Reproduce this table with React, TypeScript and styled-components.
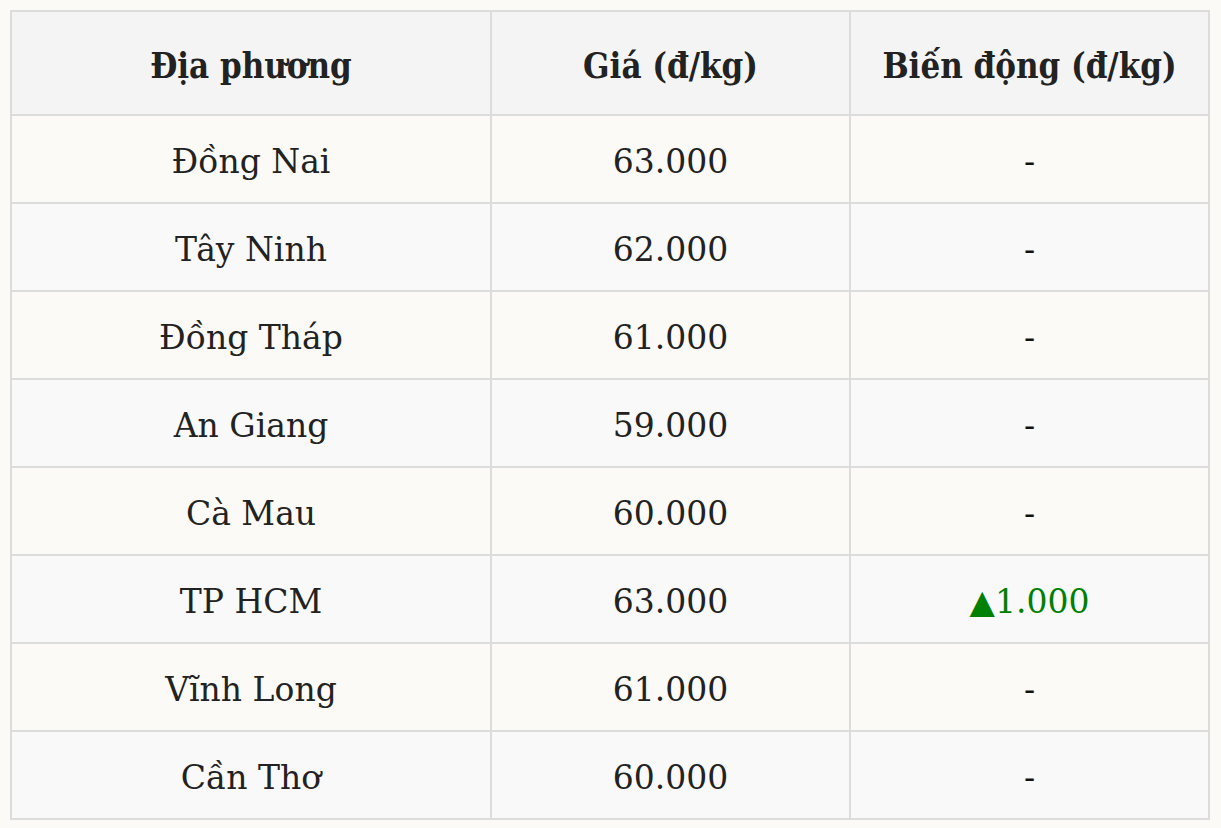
import React from "react";
import styled, { createGlobalStyle } from "styled-components";

interface PriceRow {
  region: string;
  price: string;
  change: number;
}

const GlobalStyle = createGlobalStyle`
  body {
    margin: 0;
    background-color: #fbfaf7;
    font-family: "DejaVu Serif", "Liberation Serif", serif;
    color: #222;
  }
`;

const Page = styled.div`
  padding: 10px 11px 8px 10px;
`;

const PriceTable = styled.table`
  width: 100%;
  border-collapse: collapse;
  table-layout: fixed;
  border: 2px solid #dcdcdc;
`;

const HeadCell = styled.th<{ width: string }>`
  width: ${(props) => props.width};
  height: 104px;
  padding: 6px 8px 0;
  box-sizing: border-box;
  background-color: #f4f4f4;
  border: 2px solid #dcdcdc;
  font-size: 34.5px;
  font-weight: bold;
  font-stretch: condensed;
  text-align: center;
  vertical-align: middle;
`;

const Row = styled.tr<{ striped: boolean }>`
  background-color: ${(props) => (props.striped ? "#f9f9f9" : "#fbfaf6")};
`;

const Cell = styled.td`
  height: 88px;
  padding: 4px 8px 0;
  box-sizing: border-box;
  border: 2px solid #dcdcdc;
  font-size: 33px;
  text-align: center;
  vertical-align: middle;
`;

const Change = styled.span<{ up: boolean }>`
  color: ${(props) => (props.up ? "#008000" : "#111")};
`;

const ROWS: PriceRow[] = [
  { region: "Đồng Nai", price: "63.000", change: 0 },
  { region: "Tây Ninh", price: "62.000", change: 0 },
  { region: "Đồng Tháp", price: "61.000", change: 0 },
  { region: "An Giang", price: "59.000", change: 0 },
  { region: "Cà Mau", price: "60.000", change: 0 },
  { region: "TP HCM", price: "63.000", change: 1000 },
  { region: "Vĩnh Long", price: "61.000", change: 0 },
  { region: "Cần Thơ", price: "60.000", change: 0 },
];

const formatChange = (value: number) =>
  value === 0 ? "-" : "▲" + value.toLocaleString("de-DE");

const App: React.FC = () => {
  return (
    <Page>
      <GlobalStyle />
      <PriceTable>
        <thead>
          <tr>
            <HeadCell width="480px">Địa phương</HeadCell>
            <HeadCell width="359px">Giá (đ/kg)</HeadCell>
            <HeadCell width="auto">Biến động (đ/kg)</HeadCell>
          </tr>
        </thead>
        <tbody>
          {ROWS.map((row, i) => (
            <Row key={row.region} striped={i % 2 === 1}>
              <Cell>{row.region}</Cell>
              <Cell>{row.price}</Cell>
              <Cell>
                <Change up={row.change > 0}>{formatChange(row.change)}</Change>
              </Cell>
            </Row>
          ))}
        </tbody>
      </PriceTable>
    </Page>
  );
};

export default App;
